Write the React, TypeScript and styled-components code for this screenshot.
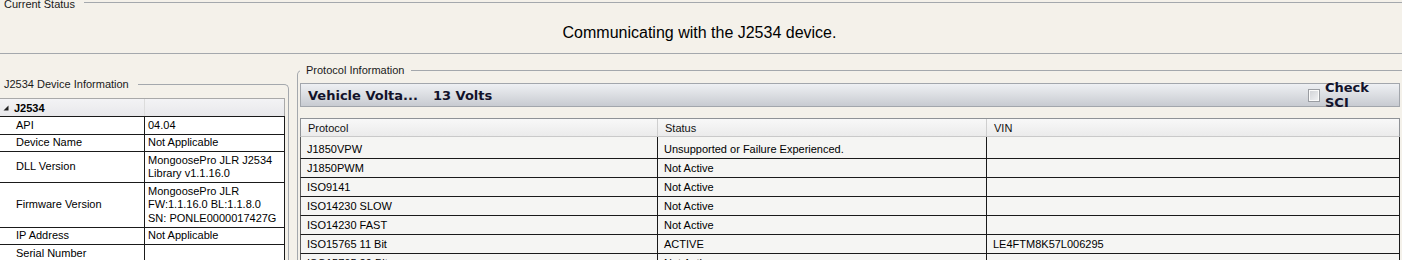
import React from 'react';
import styled, { createGlobalStyle } from 'styled-components';

const FRAME = '#a4a8ad';
const UI_FONT = '"Liberation Sans", Arial, sans-serif';
const BOLD_FONT = '"DejaVu Sans", Verdana, sans-serif';

const GlobalStyle = createGlobalStyle`
  html, body {
    margin: 0;
    padding: 0;
    background: #f4f1ea;
    overflow: hidden;
  }
  body {
    font-family: ${UI_FONT};
    font-size: 11px;
    color: #000;
  }
  #root {
    width: 1402px;
    height: 260px;
    overflow: hidden;
  }
`;

const Page = styled.div`
  display: flex;
  flex-direction: column;
  width: 1402px;
`;

const Legend = styled.legend<{ $padLeft: number; $padRight: number; $padTop?: number }>`
  padding: ${(p) => p.$padTop ?? 0}px ${(p) => p.$padRight}px 0 ${(p) => p.$padLeft}px;
  margin: 0;
  font-family: ${UI_FONT};
  font-size: 11px;
  line-height: 13px;
  color: #1a1a1a;
  white-space: nowrap;
`;

const StatusGroup = styled.fieldset`
  margin: -6px -3px 0 -3px;
  padding: 0 5px 0 2px;
  border: 1px solid ${FRAME};
  border-left-color: transparent;
  min-width: 0;
`;

const StatusText = styled.div`
  height: 42px;
  box-sizing: border-box;
  padding-top: 2px;
  display: flex;
  align-items: center;
  justify-content: center;
  font-family: ${UI_FONT};
  font-size: 16px;
  color: #000;
`;

const Columns = styled.div`
  display: flex;
  align-items: flex-start;
  gap: 8px;
  margin: 10px -3px 0 -3px;
`;

const DeviceGroup = styled.fieldset`
  flex: 0 0 292px;
  box-sizing: border-box;
  margin: 14px 0 0 0;
  padding: 7px 3px 0 2px;
  border: 1px solid ${FRAME};
  border-bottom: none;
  border-top-right-radius: 5px;
  min-width: 0;
`;

const ProtocolGroup = styled.fieldset`
  flex: 1 1 auto;
  box-sizing: border-box;
  margin: 0;
  padding: 6px 3px 0 2px;
  border: 1px solid ${FRAME};
  border-bottom: none;
  border-top-left-radius: 5px;
  min-width: 0;
`;

/* ---------- device information property grid ---------- */

const PropTable = styled.div`
  display: flex;
  flex-direction: column;
  width: 285px;
`;

const PropHeader = styled.div`
  display: grid;
  grid-template-columns: 145px 140px;
  height: 19px;
  box-sizing: border-box;
  border-top: 1px solid #a9a9a9;
  border-bottom: 1px solid #1a1a1a;
  background: linear-gradient(#f3f3f5, #e8e8eb);
`;

const PropHeaderCell = styled.div<{ $last?: boolean }>`
  display: flex;
  align-items: center;
  gap: 5px;
  padding-left: 3px;
  border-right: 1px solid ${(p) => (p.$last ? '#a9a9a9' : '#dcdcdc')};
  font-family: ${UI_FONT};
  font-weight: bold;
  font-size: 11px;
  color: #000;
`;

const PropRow = styled.div`
  display: grid;
  grid-template-columns: 145px 140px;
  border-bottom: 1px solid #1a1a1a;
  background: #fff;
`;

const PropCell = styled.div<{ $label?: boolean }>`
  display: flex;
  flex-direction: column;
  justify-content: center;
  padding: 1.5px 2px 1.5px ${(p) => (p.$label ? 16 : 3)}px;
  min-height: 13.5px;
  line-height: 13.5px;
  border-right: 1px solid #1a1a1a;
  font-family: ${UI_FONT};
  font-size: 11px;
  color: #000;
  white-space: nowrap;
  overflow: hidden;
`;

/* ---------- protocol panel ---------- */

const VoltageBar = styled.div`
  display: flex;
  align-items: center;
  height: 24px;
  box-sizing: border-box;
  margin-right: 1px;
  padding: 0 12px 0 7px;
  border: 1px solid #a2a6ac;
  background: linear-gradient(#eef0f3, #c8cbd1);
  font-family: ${BOLD_FONT};
  font-weight: bold;
  font-size: 13px;
  color: #12122a;
`;

const VoltValue = styled.span`
  margin-left: 15px;
`;

const CheckWrap = styled.label`
  margin-left: auto;
  display: flex;
  align-items: center;
  gap: 5px;
`;

const CheckBox = styled.span`
  width: 12px;
  height: 13px;
  box-sizing: border-box;
  border: 1px solid #9a9da2;
  box-shadow: inset 0 0 0 1px #fbfbfb;
  background: linear-gradient(135deg, #cfd1d5, #f2f3f5);
  margin-top: 1px;
`;

const CheckText = styled.span`
  width: 62px;
  line-height: 15.5px;
  white-space: normal;
`;

const Grid = styled.div`
  margin: 11px 1px 0 0;
  display: flex;
  flex-direction: column;
`;

const GridHeader = styled.div`
  display: grid;
  grid-template-columns: 357px 329px 1fr;
  height: 19px;
  box-sizing: border-box;
  border: 1px solid #8f9296;
  border-bottom-color: #c9c9c9;
  background: linear-gradient(#f8f8f8, #ebebeb);
`;

const GridHeaderCell = styled.div<{ $last?: boolean }>`
  display: flex;
  align-items: center;
  padding-left: 7px;
  border-right: ${(p) => (p.$last ? 'none' : '1px solid #cfcfcf')};
  font-family: ${UI_FONT};
  font-size: 11px;
  color: #111;
`;

const GridRow = styled.div<{ $tall?: boolean }>`
  display: grid;
  grid-template-columns: 357px 329px 1fr;
  height: ${(p) => (p.$tall ? 22 : 19)}px;
  box-sizing: border-box;
  border-left: 1px solid #5a5a5a;
  border-right: 1px solid #1a1a1a;
  border-bottom: 1px solid #1a1a1a;
  background: #f5f5f3;
`;

const GridCell = styled.div<{ $last?: boolean }>`
  display: flex;
  align-items: flex-end;
  padding: 0 0 2px 6px;
  line-height: 13.5px;
  border-right: ${(p) => (p.$last ? 'none' : '1px solid #1a1a1a')};
  font-family: ${UI_FONT};
  font-size: 11px;
  color: #000;
  white-space: nowrap;
  overflow: hidden;
`;

const ExpandGlyph = () => (
  <svg width="6" height="6" viewBox="0 0 6 6">
    <polygon points="5.5,0.5 5.5,5.5 0.5,5.5" fill="#222" />
  </svg>
);

const deviceRows: { label: string; value: string[] }[] = [
  { label: 'API', value: ['04.04'] },
  { label: 'Device Name', value: ['Not Applicable'] },
  { label: 'DLL Version', value: ['MongoosePro JLR J2534', 'Library v1.1.16.0'] },
  {
    label: 'Firmware Version',
    value: ['MongoosePro JLR', 'FW:1.1.16.0 BL:1.1.8.0', 'SN: PONLE0000017427G'],
  },
  { label: 'IP Address', value: ['Not Applicable'] },
  { label: 'Serial Number', value: [''] },
  { label: 'Vendor', value: [''] },
];

const protocolRows: [string, string, string][] = [
  ['J1850VPW', 'Unsupported or Failure Experienced.', ''],
  ['J1850PWM', 'Not Active', ''],
  ['ISO9141', 'Not Active', ''],
  ['ISO14230 SLOW', 'Not Active', ''],
  ['ISO14230 FAST', 'Not Active', ''],
  ['ISO15765 11 Bit', 'ACTIVE', 'LE4FTM8K57L006295'],
  ['ISO15765 29 Bit', 'Not Active', ''],
];

export default function App() {
  return (
    <Page>
      <GlobalStyle />
      <StatusGroup>
        <Legend $padLeft={4} $padRight={9} $padTop={4}>Current Status</Legend>
        <StatusText>Communicating with the J2534 device.</StatusText>
      </StatusGroup>

      <Columns>
        <DeviceGroup>
          <Legend $padLeft={4} $padRight={9}>J2534 Device Information</Legend>
          <PropTable>
            <PropHeader>
              <PropHeaderCell>
                <ExpandGlyph />
                <span>J2534</span>
              </PropHeaderCell>
              <PropHeaderCell $last />
            </PropHeader>
            {deviceRows.map((r) => (
              <PropRow key={r.label}>
                <PropCell $label>{r.label}</PropCell>
                <PropCell>
                  {r.value.map((line, i) => (
                    <span key={i}>{line || '\u00a0'}</span>
                  ))}
                </PropCell>
              </PropRow>
            ))}
          </PropTable>
        </DeviceGroup>

        <ProtocolGroup>
          <Legend $padLeft={6} $padRight={7}>Protocol Information</Legend>
          <VoltageBar>
            <span>Vehicle Volta...</span>
            <VoltValue>13 Volts</VoltValue>
            <CheckWrap>
              <CheckBox />
              <CheckText>Check SCI</CheckText>
            </CheckWrap>
          </VoltageBar>
          <Grid>
            <GridHeader>
              <GridHeaderCell>Protocol</GridHeaderCell>
              <GridHeaderCell>Status</GridHeaderCell>
              <GridHeaderCell $last>VIN</GridHeaderCell>
            </GridHeader>
            {protocolRows.map(([proto, status, vin], i) => (
              <GridRow key={proto} $tall={i === 0}>
                <GridCell>{proto}</GridCell>
                <GridCell>{status}</GridCell>
                <GridCell $last>{vin}</GridCell>
              </GridRow>
            ))}
          </Grid>
        </ProtocolGroup>
      </Columns>
    </Page>
  );
}
